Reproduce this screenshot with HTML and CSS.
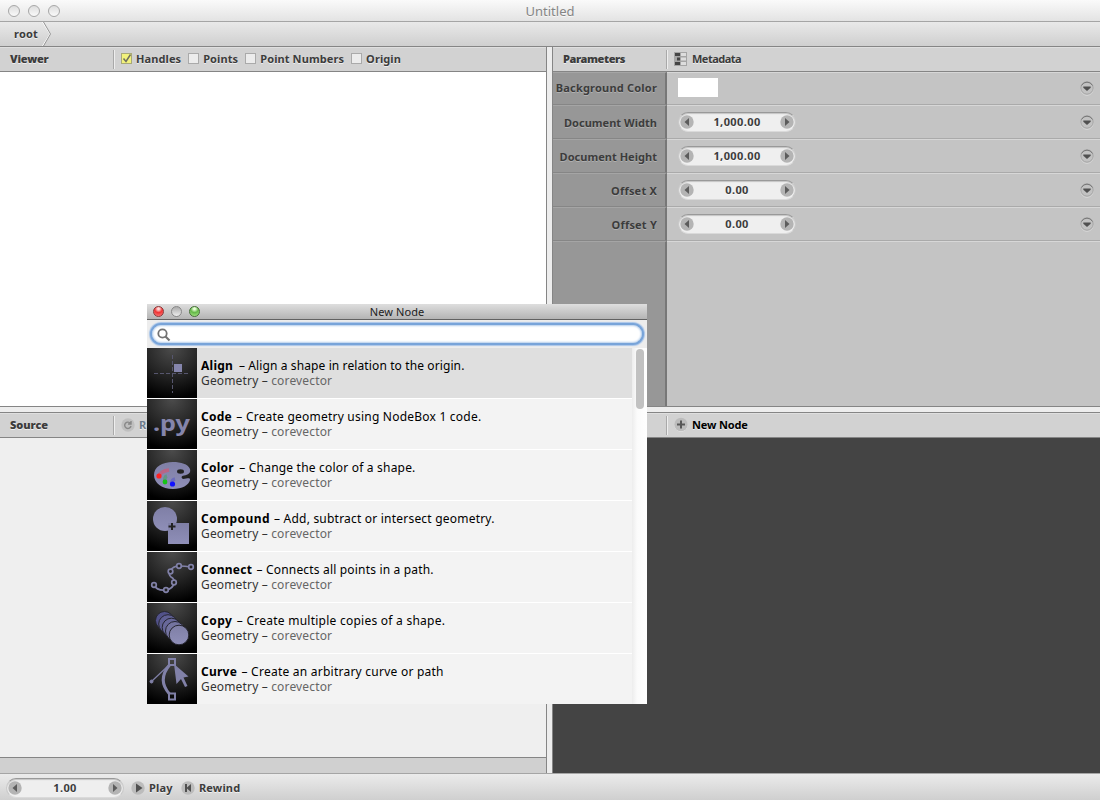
FILE: index.html
```html
<!DOCTYPE html>
<html lang="en">
<head>
<meta charset="utf-8">
<title>Untitled</title>
<link rel="stylesheet" href="styles.css">
</head>
<body>
<svg class="defs" width="0" height="0">
  <defs>
    <linearGradient id="lav" x1="0" y1="0" x2="0" y2="1"><stop offset="0" stop-color="#7f7fa6"/><stop offset="1" stop-color="#8f8fb8"/></linearGradient>
    <symbol id="left" viewBox="0 0 14 14"><circle cx="7" cy="7" r="6.700" fill="#b4b4b4"/><path d="M9 3v8L4.500 7z" fill="#5c5c5c"/></symbol>
    <symbol id="right" viewBox="0 0 14 14"><circle cx="7" cy="7" r="6.700" fill="#b4b4b4"/><path d="M5 3v8L9.500 7z" fill="#5c5c5c"/></symbol>
    <symbol id="menu" viewBox="0 0 14 15"><circle cx="7" cy="8" r="6.200" fill="none" stroke="#dedede"/><circle cx="7" cy="7" r="6.200" fill="#c2c2c2" stroke="#a3a3a3"/><path d="M1.500 4.500A6.200 6.200 0 0 1 12.500 4.500" fill="none" stroke="#777"/><path d="M3.300 5.500h7.400v1.300L7 10 3.300 6.800z" fill="#505050"/></symbol>
  </defs>
</svg>
<header class="titlebar"><div class="lights"><i></i><i></i><i></i></div><span class="title">Untitled</span></header>
<nav class="crumbs"><span>root</span><svg width="10" height="24" viewBox="0 0 10 24"><path d="M1.500 0L9 12 1.500 24" transform="translate(-1)" fill="none" stroke="#fff"/><path d="M1.500 0L8.500 12 1.500 24" fill="none" stroke="#969696"/></svg></nav>
<main class="work">
  <section class="col left">
    <div class="pane top">
      <div class="bar"><b class="name viewer">Viewer</b><div class="tools checks">
        <label><svg class="box" width="11" height="11"><rect x=".5" y=".5" width="10" height="10" fill="#f2f27c" stroke="#a9a977"/><path d="M2.500 5.500L5 8.500 9.500 1.500" fill="none" stroke="#707060" stroke-width="1.500"/></svg><span>Handles</span></label>
        <label><i class="box"></i><span>Points</span></label>
        <label><i class="box"></i><span>Point Numbers</span></label>
        <label><i class="box"></i><span>Origin</span></label>
      </div></div>
      <div class="canvas"></div>
    </div>
    <div class="hsplit"></div>
    <div class="pane bottom">
      <div class="bar"><b class="name source-name">Source</b><div class="tools reload"><svg width="14" height="14"><circle cx="7" cy="7" r="6.700" fill="#bfbfbf"/><path d="M9.500 5.500A3.200 3.200 0 1 0 10 8M10 3v3H7" fill="none" stroke="#888" stroke-width="1.400"/></svg><span>R</span></div></div>
      <div class="source"></div>
      <div class="status"></div>
    </div>
  </section>
  <div class="vsplit"></div>
  <section class="col right">
    <div class="pane top">
      <div class="bar"><b class="name parameters">Parameters</b><div class="tools"><svg width="13" height="14"><rect width="13" height="14" fill="#a5a5a5"/><path d="M1 1h5v3H1zM3 5.500h3v3H3zM1 10h5v3H1z" fill="#444"/><path d="M7 1h5v3H7zM7 5.500h5v3H7zM7 10h5v3H7z" fill="#ddd"/></svg><span class="metadata">Metadata</span></div></div>
      <div class="params">
        <div class="row first"><label>Background Color</label><div class="value"><i class="swatch"></i><svg width="14" height="15"><use href="#menu"/></svg></div></div>
        <div class="row"><label>Document Width</label><div class="value"><div class="spin"><svg width="14" height="14"><use href="#left"/></svg><span>1,000.00</span><svg width="14" height="14"><use href="#right"/></svg></div><svg width="14" height="15"><use href="#menu"/></svg></div></div>
        <div class="row"><label>Document Height</label><div class="value"><div class="spin"><svg width="14" height="14"><use href="#left"/></svg><span>1,000.00</span><svg width="14" height="14"><use href="#right"/></svg></div><svg width="14" height="15"><use href="#menu"/></svg></div></div>
        <div class="row offset"><label>Offset X</label><div class="value"><div class="spin"><svg width="14" height="14"><use href="#left"/></svg><span>0.00</span><svg width="14" height="14"><use href="#right"/></svg></div><svg width="14" height="15"><use href="#menu"/></svg></div></div>
        <div class="row offset"><label>Offset Y</label><div class="value"><div class="spin"><svg width="14" height="14"><use href="#left"/></svg><span>0.00</span><svg width="14" height="14"><use href="#right"/></svg></div><svg width="14" height="15"><use href="#menu"/></svg></div></div>
        <div class="row rest"><label></label><div class="value"></div></div>
      </div>
    </div>
    <div class="hsplit"></div>
    <div class="pane bottom">
      <div class="bar"><b class="name"></b><div class="tools new"><svg width="14" height="15"><circle cx="7" cy="8" r="6.300" fill="none" stroke="#e5e5e5"/><circle cx="7" cy="7.500" r="6.700" fill="#bcbcbc"/><path d="M7 3.500v8M3 7.500h8" stroke="#585858" stroke-width="2"/></svg><span>New Node</span></div></div>
      <div class="network"></div>
    </div>
  </section>
</main>
<footer class="player">
  <div class="spin"><svg width="14" height="14"><use href="#left"/></svg><span>1.00</span><svg width="14" height="14"><use href="#right"/></svg></div>
  <div class="btn play"><svg width="14" height="14"><circle cx="7" cy="7" r="6.700" fill="#bcbcbc"/><path d="M5 2.500v9l6.500-4.500z" fill="#505050"/></svg><span>Play</span></div>
  <div class="btn rewind"><svg width="14" height="14"><circle cx="7" cy="7" r="6.700" fill="#bcbcbc"/><path d="M4 3h2v3.500L10 3v8L6 7.500V11H4z" fill="#505050"/></svg><span>Rewind</span></div>
</footer>

<div class="dialog">
  <div class="dialog-title"><div class="dots"><i class="red"></i><i class="gray"></i><i class="green"></i></div><span>New Node</span></div>
  <div class="search"><div class="field"><svg width="14" height="14"><circle cx="5.500" cy="5.500" r="4.200" fill="none" stroke="#727272" stroke-width="1.800"/><path d="M8.500 8.500l4 4" stroke="#727272" stroke-width="2.200"/></svg></div></div>
  <div class="results">
    <ul>
      <li class="selected"><svg class="ico" width="50" height="50"><path d="M7 25.500h36M25.500 7v38" stroke="#56566e" stroke-dasharray="4 2"/><path d="M27 16h8v8h-8z" fill="#8585ac"/></svg><div class="txt"><p><b>Align</b> <span class="align">– Align a shape in relation to the origin.</span></p><p class="sub">Geometry – <em>corevector</em></p></div></li>
      <li><svg class="ico" width="50" height="50"><text class="py" x="6" y="32" textLength="37" lengthAdjust="spacingAndGlyphs">.py</text></svg><div class="txt"><p><b>Code</b> <span class="code">– Create geometry using NodeBox 1 code.</span></p><p class="sub">Geometry – <em>corevector</em></p></div></li>
      <li><svg class="ico" width="50" height="50"><path d="M43 19C41 14 34 12 26 12C15 12 7 17 7 25C7 33 15 39 26 39C35 39 42 35 43 30C43 27 40 29 36 29C34 28 34 26 37 25.500C41 25 44 23 43 19z" fill="url(#lav)"/><ellipse cx="33.500" cy="21.500" rx="3.500" ry="2.200" fill="#222"/><path d="M12 26Q14 21 22 20" stroke="#c75c7c" stroke-width="3.500" fill="none" opacity=".8"/><path d="M18 32Q17 27 20 26" stroke="#5a9a7a" stroke-width="3.500" fill="none" opacity=".8"/><path d="M25 34Q24 30 28 29" stroke="#6565c0" stroke-width="3.500" fill="none" opacity=".8"/><circle cx="12" cy="26" r="2.600" fill="#f22"/><circle cx="18" cy="32" r="2.400" fill="#15c515"/><circle cx="25.500" cy="34" r="2.600" fill="#11f"/></svg><div class="txt"><p><b>Color</b> <span class="color">– Change the color of a shape.</span></p><p class="sub">Geometry – <em>corevector</em></p></div></li>
      <li><svg class="ico" width="50" height="50"><circle cx="18" cy="18" r="12" fill="url(#lav)"/><path d="M21 22h21v21H21z" fill="url(#lav)"/><path d="M25 22v7M21.500 25.500h7" stroke="#222" stroke-width="2"/></svg><div class="txt"><p><b class="wide">Compound</b> <span class="compound">– Add, subtract or intersect geometry.</span></p><p class="sub">Geometry – <em>corevector</em></p></div></li>
      <li><svg class="ico" width="50" height="50" fill="#222" stroke="#8181a8" stroke-width="1.700"><path d="M7 33Q10 39 19 38Q26 37 27 31Q28 27 24 25Q21 22 23 19Q26 14 32 14Q38 14 44 15" fill="none"/><circle cx="7" cy="33" r="2.300"/><circle cx="19" cy="38" r="2.300"/><circle cx="27" cy="30.500" r="2.300"/><circle cx="23.500" cy="19.500" r="2.300"/><circle cx="32" cy="14" r="2.300"/><circle cx="44" cy="15" r="2.300"/></svg><div class="txt"><p><b>Connect</b> <span class="connect">– Connects all points in a path.</span></p><p class="sub">Geometry – <em>corevector</em></p></div></li>
      <li><svg class="ico" width="50" height="50" fill="#52528a" stroke="#252530" stroke-width="1"><circle cx="17.500" cy="17.500" r="9"/><circle cx="21" cy="21" r="9.300" fill="#606094"/><circle cx="24.500" cy="24.500" r="9.300" fill="#68689a"/><circle cx="28" cy="28" r="9.500" fill="#7474a0"/><circle cx="32" cy="32" r="9.800" fill="url(#lav)"/></svg><div class="txt"><p><b class="wide">Copy</b> <span class="copy">– Create multiple copies of a shape.</span></p><p class="sub">Geometry – <em>corevector</em></p></div></li>
      <li><svg class="ico" width="50" height="50" fill="none" stroke="#8181a8" stroke-width="2"><path d="M22.500 11Q10 26 22.500 40" stroke-width="3"/><path d="M22 11L5 27" stroke-width="1.200"/><circle cx="4.500" cy="27.500" r="1.500" fill="#8181a8" stroke-width="1"/><path d="M22 5h6v6h-6zM22 39.500h6v6h-6z"/><path d="M27 10L41.500 22.500 36.500 23.500 40.500 32 38 33 34 25 29.500 30z" fill="#8181a8" stroke="none"/></svg><div class="txt"><p><b>Curve</b> <span class="curve">– Create an arbitrary curve or path</span></p><p class="sub">Geometry – <em>corevector</em></p></div></li>
    </ul>
    <div class="scroll"><i></i></div>
  </div>
</div>
</body>
</html>
```
FILE: styles.css
```css
* { box-sizing: border-box; }
body { margin: 0; width: 1100px; height: 800px; overflow: hidden; position: relative; display: flex; flex-direction: column; background: #ededed; color: #3c3c3c; font: bold 11px/14px "Noto Sans", "Open Sans", sans-serif; text-shadow: 0 1px 0 rgba(255,255,255,.65); letter-spacing: .2px; }
svg { display: block; flex: none; }
.defs { position: absolute; }
i { display: block; }
.titlebar { height: 22px; display: grid; grid-template-columns: 1fr auto 1fr; align-items: center; background: linear-gradient(#fafafa, #e3e3e3); border-bottom: 1px solid #a5a5a5; }
.title { font-size: 13px; font-weight: 400; color: #858585; letter-spacing: .03px; }
.lights { display: flex; gap: 8px; padding-left: 8px; }
.lights i { width: 12px; height: 12px; border-radius: 50%; border: 1px solid #a7a7a7; background: linear-gradient(#ddd, #fafafa); }
.crumbs { height: 25px; display: flex; align-items: center; padding-left: 14px; gap: 4px; background: linear-gradient(#e9e9e9, #cfcfcf); border-bottom: 1px solid #858585; }
.work { height: 726px; display: flex; }
.col { display: flex; flex-direction: column; }
.left { width: 547px; border-right: 1px solid #858585; }
.right { flex: 1; border-left: 1px solid #858585; }
.vsplit { width: 5px; background: #ededed; }
.hsplit { height: 5px; background: #ededed; }
.pane { display: flex; flex-direction: column; }
.pane.top { height: 360px; border-bottom: 1px solid #858585; }
.pane.bottom { flex: 1; border-top: 1px solid #858585; }
.bar { height: 25px; flex: none; display: flex; align-items: center; background: #d2d2d2; border-top: 1px solid #dfdfdf; border-bottom: 1px solid #858585; }
.name { width: 114px; height: 19px; padding: 2px 0 0 10px; border-right: 1px solid #a9a9a9; box-shadow: 1px 0 #eee; }
.viewer { letter-spacing: -.2px; }
.source-name { letter-spacing: -.05px; }
.parameters { letter-spacing: -.4px; }
.tools { display: flex; align-items: center; gap: 4px; padding: 0 0 2px 7px; }
.metadata { letter-spacing: -.5px; margin-left: 1px; }
.checks { gap: 7px; letter-spacing: .1px; }
.checks label { display: flex; align-items: center; gap: 4px; white-space: nowrap; }
.box { width: 11px; height: 11px; }
i.box { border: 1px solid #aaa; background: #ececec; }
.canvas { flex: 1; background: #fff; }
.reload { color: #6c7b8c; }
.new { color: #000; letter-spacing: -.15px; }
.source { flex: 1; background: #efefef; }
.status { height: 16px; background: #d0d0d0; border-top: 1px solid #858585; }
.network { flex: 1; background: #444; }
.params { flex: 1; display: flex; flex-direction: column; }
.row { height: 34px; display: flex; }
.row.first { height: 33px; }
.row.rest { height: auto; flex: 1; }
.row label { width: 114px; padding: 10px 8px 0 0; text-align: right; white-space: nowrap; background: #979797; border-bottom: 1px solid #868686; border-top: 1px solid #a5a5a5; border-right: 2px solid #777; text-shadow: 0 1px 0 rgba(255,255,255,.25); letter-spacing: .03px; }
.row.first label { padding-top: 8px; letter-spacing: .2px; }
.row.offset label { letter-spacing: .2px; }
.value { flex: 1; display: flex; justify-content: space-between; align-items: center; padding: 0 6px 0 11px; background: #c4c4c4; border-bottom: 1px solid #aaa; border-top: 1px solid #d7d7d7; }
.rest label, .rest .value { border-bottom: 0; }
.swatch { width: 40px; height: 19px; background: #fff; margin-top: -2px; }
.spin { width: 118px; height: 20px; display: flex; align-items: center; justify-content: space-between; padding: 0 1px; border-radius: 10px; background: #efefef; border: 1px solid #c8c8c8; border-top-color: #999; border-bottom-color: #dadada; box-shadow: inset 0 1px 1px #c4c4c4; letter-spacing: .4px; }
.player { height: 27px; display: flex; align-items: center; padding: 2px 0 0 6px; background: linear-gradient(#ebebeb, #cfcfcf); border-top: 1px solid #a5a5a5; }
.btn { display: flex; align-items: center; gap: 4px; letter-spacing: .15px; }
.play { margin-left: 7px; width: 50px; }
.dialog { position: absolute; left: 147px; top: 304px; width: 500px; height: 400px; background: #ededed; text-shadow: none; color: #000; display: flex; flex-direction: column; letter-spacing: .25px; }
.dialog-title { height: 16px; display: grid; grid-template-columns: 1fr auto 1fr; align-items: center; background: linear-gradient(#dedede, #b4b4b4); border-bottom: 1px solid #626262; font-weight: 400; color: #222; letter-spacing: .1px; }
.dots { display: flex; gap: 7px; padding-left: 6px; }
.dots i { width: 11px; height: 11px; border-radius: 50%; border: 1px solid #777; }
.dots .red { background: radial-gradient(circle at 50% 20%, #ffd8d8 10%, #e33 45%, #f88); border-color: #8b3838; }
.dots .gray { background: linear-gradient(#aaa, #eee); border-color: #888; }
.dots .green { background: radial-gradient(circle at 50% 20%, #e9ffd8 10%, #64b848 45%, #b2ef90); border-color: #466f38; }
.search { height: 28px; padding: 3px 3px 0; }
.field { height: 22px; border-radius: 11px; border: 2px solid #78a4d9; background: #fff; box-shadow: 0 0 1px 1px #a9c5e9, inset 0 0 2px 1px #b4cdeb; padding: 3px 0 0 5px; }
.results { flex: 1; display: flex; min-height: 0; }
ul { list-style: none; margin: 0; padding: 0; width: 485px; }
li { height: 51px; display: flex; background: #f3f3f3; border-bottom: 1px solid #fff; }
li.selected { background: #dfdfdf; }
li:last-child { height: 50px; border: 0; }
.ico { background: radial-gradient(circle at 50% 0, #4c4c4c 0, #242424 50%, #000 90%); }
.py { font: bold 22px "Noto Sans", sans-serif; fill: #8585ac; letter-spacing: 0; }
.txt { padding: 10px 0 0 4px; font-size: 12px; line-height: 15px; font-weight: 400; white-space: nowrap; }
.wide { letter-spacing: .5px; }
.align { margin-left: 2.5px; letter-spacing: .11px; }
.code { margin-left: 1px; letter-spacing: .22px; }
.color { margin-left: 2px; letter-spacing: .2px; }
.compound { margin-left: .5px; letter-spacing: .21px; }
.connect { margin-left: 1px; letter-spacing: .18px; }
.copy { margin-left: 1px; }
.curve { margin-left: 1px; letter-spacing: .24px; }
p { margin: 0; }
.sub { color: #333; letter-spacing: .16px; }
.sub em { font-style: normal; color: #666; }
.scroll { flex: 1; padding: 1px 3px 0 4px; background: linear-gradient(90deg, #ededed, #fbfbfb 35%, #fff); }
.scroll i { width: 8px; height: 60px; border-radius: 4px; background: #c1c1c1; }
```
